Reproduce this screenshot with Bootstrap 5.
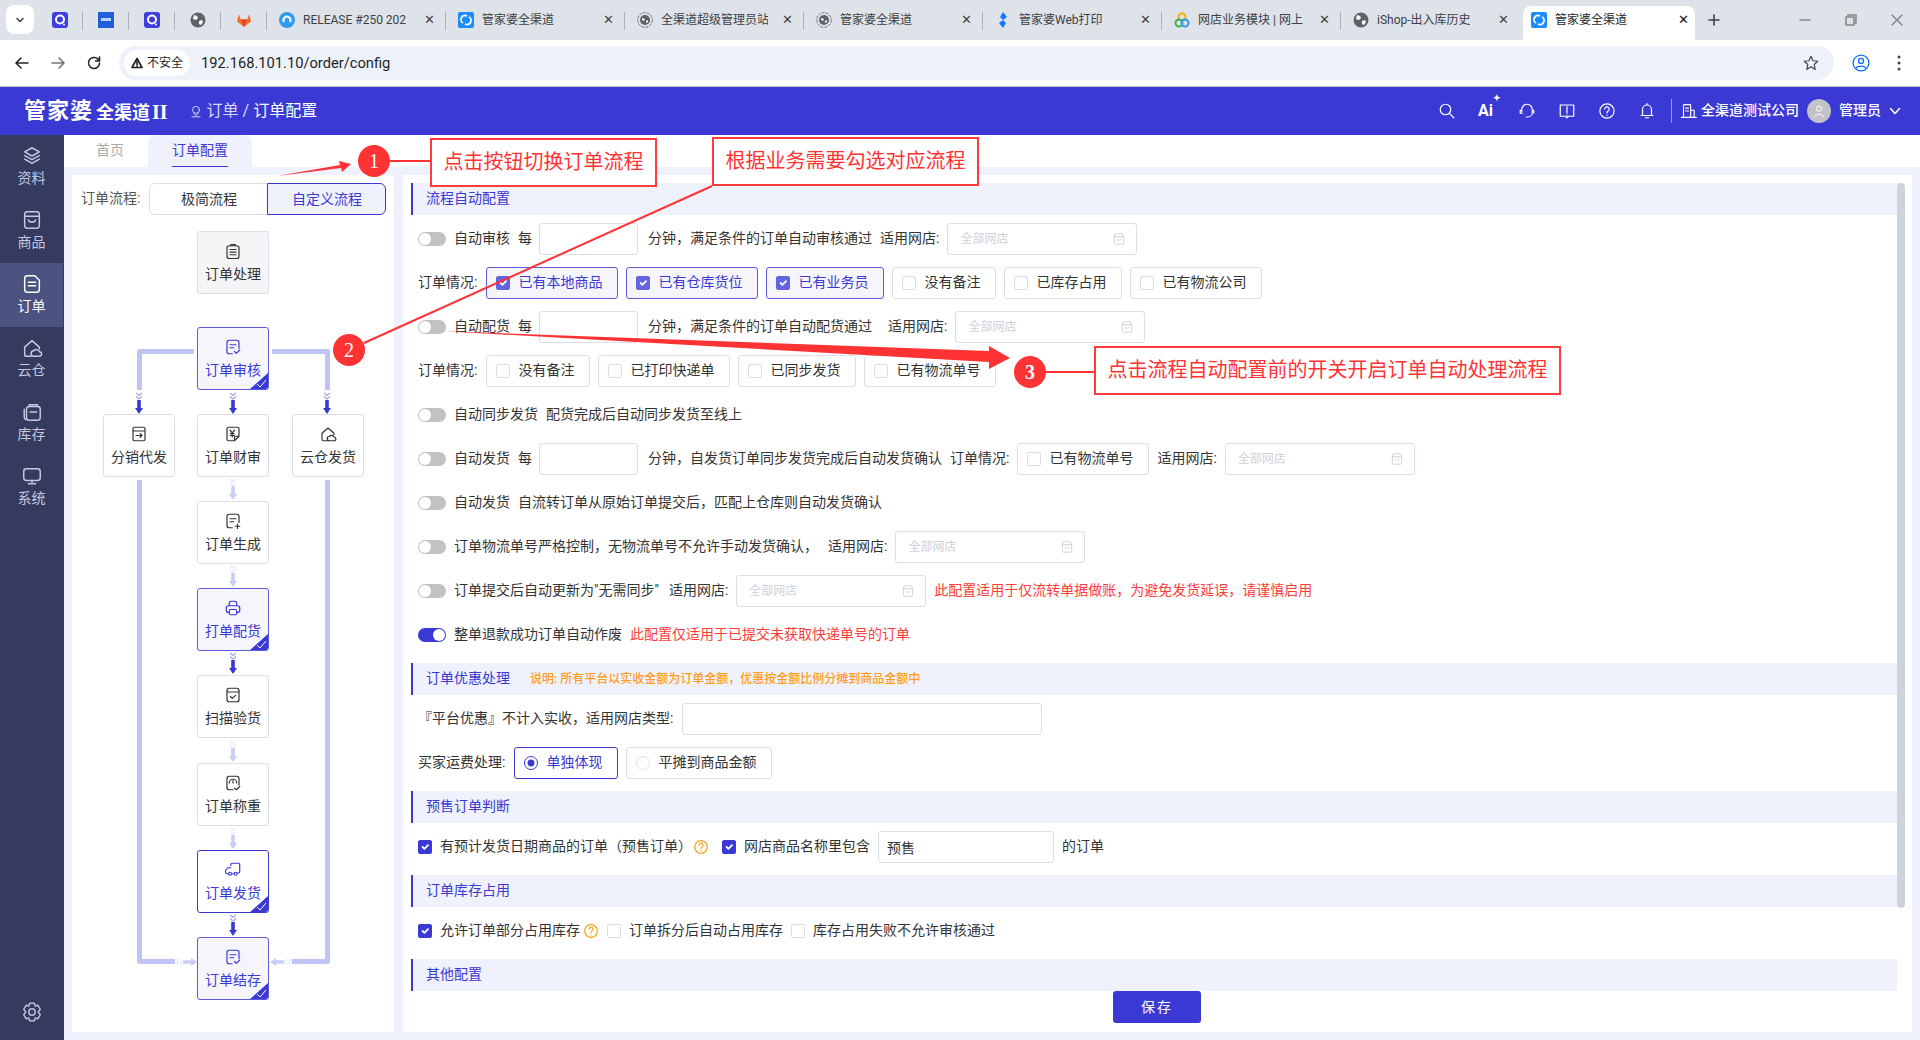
<!DOCTYPE html>
<html lang="zh-CN">
<head>
<meta charset="UTF-8">
<meta name="viewport" content="width=device-width, initial-scale=1">
<title>管家婆全渠道</title>
<link href="https://cdn.jsdelivr.net/npm/bootstrap@5.3.0/dist/css/bootstrap.min.css" rel="stylesheet">
<style>
body { width: 1920px; height: 1040px; overflow: hidden; background: #eff1fd; color: #333; font: 14px/1.4 Roboto, "Noto Sans CJK SC", sans-serif; position: relative; }
svg.ico { fill: none; stroke: currentColor; stroke-width: 1.6; stroke-linecap: round; stroke-linejoin: round; display: block; }

/* browser chrome */
.tabstrip { height: 40px; background: #dee3ea; color: #3c4043; font-size: 12px; }
.tab-menu { width: 28px; height: 29px; margin: 5px 3px 0 6px; background: #fff; border-radius: 8px; }
.tab-pin, .tab-wide { position: relative; flex: none; height: 40px; }
.tab-pin { width: 46px; }
.tab-wide { width: 179px; padding-left: 12px; }
.tab-pin:after, .tab-wide:after { content: ""; position: absolute; right: 0; top: 12px; height: 18px; border-right: 1px solid #aab0b8; }
.tab-wide.last:after { display: none; }
.tab-name { width: 107px; margin-left: 8px; white-space: nowrap; overflow: hidden; }
.tab-x { width: 16px; margin-left: 11px; font-size: 13px; text-align: center; color: #444; }
.tab-on { width: 172px; height: 34px; margin: 6px 0 0 3px; padding: 0 0 6px 8px; background: #fff; border-radius: 8px 8px 0 0; color: #1f1f1f; flex: none; }
.tab-on .tab-x { margin-left: 13px; color: #111; }
.tab-plus { margin-left: 13px; }
.win-ctl { width: 46px; color: #888; }
.addrbar { height: 47px; background: #fff; border-bottom: 1px solid #c7c7c7; color: #474747; }
.nav-ic { width: 36px; margin-left: 0; }
.addr-pill { width: 1715px; height: 34px; margin-left: 7px; background: #edf2fa; border-radius: 17px; padding-left: 5px; }
.addr-warn { height: 26px; width: 66px; background: #fff; border-radius: 13px; font-size: 12px; color: #1f1f1f; }
.addr-url { margin-left: 11px; font-size: 14.7px; color: #1f1f1f; }
.addr-star { margin-right: 14px; }
.addr-user { margin-left: 17px; }
.addr-dots { margin-left: 26px; }

/* app header */
.app-head { height: 48px; background: #3a39d3; color: #fff; padding-left: 24px; }
.logo-a { font-size: 22px; font-weight: 700; letter-spacing: 1px; line-height: 1; }
.logo-b { font-size: 18px; font-weight: 700; margin-left: 3px; line-height: 1; padding-top: 3px; }
.logo-b i { font: 700 20px "Liberation Serif", serif; margin-left: 2px; }
.crumb { font-size: 16px; margin-left: 21px; color: #d9d9f7; }
.crumb b { font-weight: 400; color: #fff; }
.head-right { margin-right: 3px; }
.head-ic { width: 40px; }
.ai-mark { font-size: 16px; font-weight: 700; line-height: 18px; padding-left: 5px; }
.ai-mark sup { font-size: 9px; top: -.5em; }
.head-sep { width: 1px; height: 24px; background: #9c9cea; margin: 0 8px 0 4px; }
.user-dot { width: 24px; height: 24px; border-radius: 50%; background: #c2c2c8; color: #fff; }

/* left rail */
.main-row { height: 905px; }
.rail { width: 64px; background: #343b5f; color: #c3c9e0; font-size: 14px; position: relative; }
.rail-item { height: 64px; width: 63px; padding-top: 10px; line-height: 20px; }
.rail-item svg { margin-bottom: 1px; }
.rail-item.on { background: #4b5380; color: #fff; }
.rail-gear { position: absolute; left: 21px; top: 866px; color: #b9c0de; }

/* tabs + panels */
.page-tabs { height: 32px; background: #fff; font-size: 14px; padding-left: 20px; }
.ptab { height: 32px; line-height: 30px; }
.ptab.idle { width: 52px; margin-right: 12px; text-align: center; color: #aaa; }
.ptab.cur { width: 104px; background: #eff1fd; border-radius: 8px 8px 0 0; text-align: center; color: #3a39d3; position: relative; }
.ptab.cur:after { content: ""; position: absolute; left: 24px; right: 24px; bottom: 0; height: 1px; background: #3a39d3; }
.panels { padding: 8px 8px 8px 8px; gap: 9px; height: 873px; }
.flow-panel { width: 322px; background: #fff; position: relative; flex: none; }
.conf-panel { width: 1509px; background: #fff; position: relative; flex: none; padding: 8px 15px 0 8px; }

.seg-line { position: absolute; left: 9px; top: 8px; }
.seg-label { margin-right: 9px; color: #555; }
.seg-opt { width: 119px; height: 32px; border: 1px solid #dcdde6; background: #fff; color: #333; font-size: 14px; padding: 0; box-shadow: none; }
.seg-opt.on { border-color: #3a39d3; background: #eff1fd; color: #3a39d3; }

.flow-lines { position: absolute; left: 0; top: 0; }
.fnode { position: absolute; width: 72px; height: 63px; border: 1px solid #dcdde6; border-radius: 3px; background: #fff; padding-top: 10px; line-height: 20px; color: #333; overflow: hidden; }
.fnode .lbl { margin-top: 4px; }
.fnode.grey { background: #f5f5f8; }
.fnode.act { background: #f5f5fb; border-color: #5b5bdc; color: #3a39d3; }
.fnode.act2 { background: #fff; border-color: #3a39d3; color: #3a39d3; }
.fnode .tick { position: absolute; right: 0; bottom: 0; }
.fx1 { left: 125px; } .fx0 { left: 31px; } .fx2 { left: 220px; }
.fy0 { top: 56px; } .fy1 { top: 152px; } .fy2 { top: 239px; } .fy3 { top: 326px; } .fy4 { top: 413px; }
.fy5 { top: 500px; } .fy6 { top: 588px; } .fy7 { top: 675px; } .fy8 { top: 762px; }

/* config */
.cfg-scroll { height: 808px; overflow: hidden; }
.cfg-band { height: 32px; background: #eff1fd; border-left: 2px solid #3a39d3; padding-left: 13px; margin-bottom: 8px; color: #3a39d3; line-height: 31px; }
.cfg-band em { font-style: normal; font-size: 12px; font-weight: 500; color: #ff9d1a; margin-left: 20px; }
.cfg-row { height: 32px; margin-bottom: 12px; padding-left: 7px; white-space: nowrap; }
.cfg-row .form-check-input { flex: none; margin: 0; width: 14px; height: 14px; border-color: #dcdde6; border-radius: 2px; box-shadow: none; }
.cfg-row .form-check-input:checked { background-color: #3a39d3; border-color: #3a39d3; }
.sw-wrap { margin: 0; padding: 0; min-height: 0; line-height: 0; }
.cfg-row .sw-wrap .form-check-input { width: 28px; height: 14px; border: 0; border-radius: 7px; background-color: #c2c2c2; background-position: 1px center; background-size: 12px 12px; float: none; background-image: url("data:image/svg+xml,<svg xmlns='http://www.w3.org/2000/svg' viewBox='0 0 12 12'><circle cx='6' cy='6' r='6' fill='%23fff'/></svg>"); }
.cfg-row .sw-wrap .form-check-input:checked { background-color: #3a39d3; background-position: right 1px center; }
.num-in, .text-in { height: 32px; border: 1px solid #dcdde6; border-radius: 3px; box-shadow: none; padding: 0 8px; font-size: 14px; color: #333; flex: none; }
.num-in { width: 99px; margin-left: -1px; }
.cfg-w-shop { width: 360px; }
.cfg-w-pre { width: 176px; }
.shop-sel { width: 190px; height: 32px; border: 1px solid #dcdde6; border-radius: 3px; padding: 0 10px 0 12px; color: #cfcfd8; font-size: 12px; flex: none; }
.chk-box { height: 32px; border: 1px solid #dcdde6; border-radius: 3px; padding: 0 15px 0 9px; gap: 8px; margin: 0; background: #fff; }
.chk-box.on { border-color: #5b5bdc; background: #f5f5fb; color: #3a39d3; }
.chk-box.on .form-check-input:checked { background-color: #6264e0; border-color: #6264e0; }
.chk-box .form-check-input[type=radio] { border-radius: 50%; }
.chk-box.rad-on { border-color: #3a39d3; background: #fff; color: #3a39d3; }
.chk-box.rad-on .form-check-input:checked { background-color: #fff; border-color: #3a39d3; border-width: 1px; background-image: url("data:image/svg+xml,<svg xmlns='http://www.w3.org/2000/svg' viewBox='0 0 14 14'><circle cx='7' cy='7' r='4' fill='%233a39d3'/></svg>"); }
.lead-in { margin-right: 1px; }
.nudge { margin-left: 2px; }
.warn-red { color: #ff3b3b; }
.hint-q { color: #f5a623; flex: none; stroke-width: 1.9 !important; }
.hint-a { margin-left: -7px; }
.hint-b { margin-left: -5px; }
.after-hint { margin-left: 5px !important; }
.thumb { position: absolute; left: 1494px; top: 8px; width: 8px; height: 725px; border-radius: 4px; background: #cdd3dd; }
.save-bar { height: 32px; padding-left: 6px; }
.save-btn { width: 88px; height: 32px; background: #3a39d3; border: 0; color: #fff; font-size: 14px; border-radius: 3px; padding: 0; letter-spacing: 2px; }

/* annotations */
.mark-svg { position: absolute; left: 0; top: 0; z-index: 10; pointer-events: none; }
.mark-box { position: absolute; z-index: 11; height: 49px; background: #fff; border: 2px solid #ff3b3b; color: #ff3333; font-size: 20px; line-height: 44px; text-align: center; white-space: nowrap; }
.mb1 { left: 430px; top: 138px; width: 227px; }
.mb2 { left: 712px; top: 137px; width: 267px; }
.mb3 { left: 1094px; top: 346px; width: 467px; }
</style>
</head>
<body>

<svg width="0" height="0" class="position-absolute">
  <defs>
    <symbol id="i-layers" viewBox="0 0 24 24"><path d="M12 3l8 4.5-8 4.5-8-4.5zM4 11.5l8 4.5 8-4.5M4 15.5l8 4.5 8-4.5"/></symbol>
    <symbol id="i-bag" viewBox="0 0 24 24"><rect x="4" y="3" width="16" height="18" rx="3"/><path d="M4 8h16M8 12c1 3 7 3 8 0"/></symbol>
    <symbol id="i-doc" viewBox="0 0 24 24"><path d="M7 3h8l5 5v10a3 3 0 0 1-3 3H7a3 3 0 0 1-3-3V6a3 3 0 0 1 3-3zM8 10h8M8 14h8"/></symbol>
    <symbol id="i-cloud" viewBox="0 0 24 24"><path d="M11 21H6a2 2 0 0 1-2-2v-8l8-7 8 7v2M14 21a3 3 0 0 1 0-6 3.5 3.5 0 0 1 6 1 2.5 2.5 0 0 1 0 5z"/></symbol>
    <symbol id="i-stock" viewBox="0 0 24 24"><rect x="6" y="6" width="15" height="15" rx="3"/><path d="M3.500 9v8a4 4 0 0 0 2 3.500M9 6V4h9v2M10 12h7"/></symbol>
    <symbol id="i-screen" viewBox="0 0 24 24"><rect x="3" y="4" width="18" height="13" rx="3"/><path d="M12 17v3M8 20.500h8"/></symbol>
    <symbol id="i-gear" viewBox="0 0 24 24"><path d="M9.500 2.500h5l1 3 3-.8 2.500 4.300-2.200 3 2.200 3-2.500 4.300-3-.8-1 3h-5l-1-3-3 .8L3 14.999l2.200-3L3 9l2.500-4.300 3 .8z"/><circle cx="12" cy="12" r="3.500"/></symbol>
    <symbol id="i-clip" viewBox="0 0 24 24"><rect x="4" y="5" width="16" height="17" rx="3"/><path d="M9 5V3.500h6V5M8 10h8M8 13.500h8M8 17h8"/></symbol>
    <symbol id="i-check-doc" viewBox="0 0 24 24"><path d="M11 21H7a3 3 0 0 1-3-3V6a3 3 0 0 1 3-3h10a3 3 0 0 1 3 3v8M8 9h8M8 13h5M14 18l2.500 2.500L21 16"/></symbol>
    <symbol id="i-box-arrow" viewBox="0 0 24 24"><path d="M6 3h12a2 2 0 0 1 2 2v14a2 2 0 0 1-2 2H6a2 2 0 0 1-2-2V5a2 2 0 0 1 2-2zM4 8h16M8 14h8M13.500 11.500L16 14l-2.500 2.500"/></symbol>
    <symbol id="i-yen" viewBox="0 0 24 24"><path d="M12 21H6a2 2 0 0 1-2-2V5a2 2 0 0 1 2-2h12a2 2 0 0 1 2 2v10l-6 6zM14 21v-6h6M8 7l3 3.500L14 7M11 10.500V16M8.500 11.500h5M8.500 14h5"/></symbol>
    <symbol id="i-doc-plus" viewBox="0 0 24 24"><path d="M11 21H7a3 3 0 0 1-3-3V6a3 3 0 0 1 3-3h10a3 3 0 0 1 3 3v8M8 9h8M8 13h5M18 16v6M15 19h6"/></symbol>
    <symbol id="i-print" viewBox="0 0 24 24"><path d="M7 9V6a3 3 0 0 1 3-3h4a3 3 0 0 1 3 3v3M7 18H6a3 3 0 0 1-3-3v-3a3 3 0 0 1 3-3h12a3 3 0 0 1 3 3v3a3 3 0 0 1-3 3h-1"/><rect x="7" y="14" width="10" height="7" rx="2"/></symbol>
    <symbol id="i-box-check" viewBox="0 0 24 24"><rect x="4" y="3" width="16" height="18" rx="3"/><path d="M4 8h16M8.500 14l2.500 2.500 4.500-4"/></symbol>
    <symbol id="i-gauge" viewBox="0 0 24 24"><path d="M12 21H7a3 3 0 0 1-3-3V6a3 3 0 0 1 3-3h10a3 3 0 0 1 3 3v9M7 12a5 5 0 0 1 10 0M12 9v3M14 19l2.500 2L21 17"/></symbol>
    <symbol id="i-truck" viewBox="0 0 24 24"><path d="M9 6V5a2 2 0 0 1 2-2h8a2 2 0 0 1 2 2v9a2 2 0 0 1-2 2h-1M13 17h-2M5 17H4a2 2 0 0 1-2-2v-2l3-4h4"/><circle cx="8" cy="17" r="2"/><circle cx="15.500" cy="17" r="2"/></symbol>
    <symbol id="i-shop" viewBox="0 0 24 24"><path d="M6 3h12l2 5v11a2 2 0 0 1-2 2H6a2 2 0 0 1-2-2V8zM4 8h16M8 12c1 3 7 3 8 0"/></symbol>
    <symbol id="i-help" viewBox="0 0 24 24"><circle cx="12" cy="12" r="9.500"/><path d="M9 9.500a3 3 0 1 1 4.500 2.500c-1 .6-1.500 1.200-1.500 2.500M12 17.500v.3"/></symbol>
    <symbol id="i-globe" viewBox="0 0 16 16"><circle cx="8" cy="8" r="7.500" fill="#5f6368" stroke="none"/><path d="M4 3l3 1 1 2-2 2-3-1zM9 9l3-1 1 2-2 3-2-1z" fill="#fff" stroke="none"/></symbol>
    <symbol id="i-ring" viewBox="0 0 16 16"><circle cx="8" cy="8" r="7.300" fill="none" stroke="#6a7a8c" stroke-width="1" stroke-dasharray="3 1"/><circle cx="8" cy="8" r="5" fill="#5f6368" stroke="none"/><path d="M5 6l3 1-1 2-2-1zM9 9l2-1v2l-2 1z" fill="#fff" stroke="none"/></symbol>
    <symbol id="i-swirl" viewBox="0 0 16 16"><rect width="16" height="16" rx="2" fill="#1a8cff" stroke="none"/><path d="M5 11a4 4 0 0 1 4-7M11 5a4 4 0 0 1-4 7" fill="none" stroke="#fff" stroke-width="1.800"/></symbol>
    <symbol id="i-q" viewBox="0 0 16 16"><rect width="16" height="16" rx="3" fill="#3d3de0" stroke="none"/><circle cx="8" cy="7.500" r="4" fill="none" stroke="#fff" stroke-width="2"/><circle cx="12" cy="12.500" r="1" fill="#fff" stroke="none"/></symbol>
    <symbol id="arr-d" viewBox="0 0 8 22"><path d="M1 1l3 2.500L7 1M1 4.500L4 7l3-2.500" fill="none" stroke="currentColor" stroke-width="1.300" opacity=".45"/><path d="M2.200 8h3.600v8H8l-4 6-4-6h2.200z" fill="currentColor" stroke="none"/></symbol>
    <symbol id="tick" viewBox="0 0 18 16"><path d="M18 0v14a2 2 0 0 1-2 2H0z" fill="#3a39d3" stroke="none"/><path d="M7 11l3 3 6-7" fill="none" stroke="#fff" stroke-width="1"/></symbol>
  </defs>
</svg>

<!-- browser tabs -->
<div class="tabstrip d-flex">
  <div class="tab-menu d-flex align-items-center justify-content-center"><svg class="ico" width="10" height="10" viewBox="0 0 10 10"><path d="M2 3.500L5 6.500 8 3.500"/></svg></div>
  <div class="tab-pin d-flex align-items-center justify-content-center"><svg width="16" height="16"><use href="#i-q"/></svg></div>
  <div class="tab-pin d-flex align-items-center justify-content-center"><svg width="16" height="16" viewBox="0 0 16 16"><rect width="16" height="16" fill="#1f5fd6"/><rect x="3" y="6" width="10" height="3" fill="#bcd4ff"/></svg></div>
  <div class="tab-pin d-flex align-items-center justify-content-center"><svg width="16" height="16"><use href="#i-q"/></svg></div>
  <div class="tab-pin d-flex align-items-center justify-content-center"><svg width="16" height="16"><use href="#i-globe"/></svg></div>
  <div class="tab-pin d-flex align-items-center justify-content-center"><svg width="16" height="16" viewBox="0 0 16 16"><path d="M8 15L1 9.500 2.800 2l2 5.500h6.400l2-5.500L15 9.500z" fill="#fc6d26"/><path d="M8 15L4.800 7.500h6.400z" fill="#e24329"/></svg></div>
  <div class="tab-wide d-flex align-items-center"><svg width="16" height="16" viewBox="0 0 16 16"><circle cx="8" cy="8" r="8" fill="#2f9bf0"/><path d="M5 10a3.500 3.500 0 1 1 6 0" fill="none" stroke="#fff" stroke-width="2"/></svg><span class="tab-name">RELEASE #250 202</span><span class="tab-x">✕</span></div>
  <div class="tab-wide d-flex align-items-center"><svg width="16" height="16"><use href="#i-swirl"/></svg><span class="tab-name">管家婆全渠道</span><span class="tab-x">✕</span></div>
  <div class="tab-wide d-flex align-items-center"><svg width="16" height="16"><use href="#i-ring"/></svg><span class="tab-name">全渠道超级管理员站</span><span class="tab-x">✕</span></div>
  <div class="tab-wide d-flex align-items-center"><svg width="16" height="16"><use href="#i-ring"/></svg><span class="tab-name">管家婆全渠道</span><span class="tab-x">✕</span></div>
  <div class="tab-wide d-flex align-items-center"><svg width="16" height="16" viewBox="0 0 16 16"><path d="M8 0l4 5-4 3-3-3zM8 16l-4-5 4-3 3 3z" fill="#1677ff"/></svg><span class="tab-name">管家婆Web打印</span><span class="tab-x">✕</span></div>
  <div class="tab-wide d-flex align-items-center"><svg width="16" height="16" viewBox="0 0 16 16"><circle cx="8" cy="5" r="3.500" fill="none" stroke="#f5b301" stroke-width="2"/><circle cx="5" cy="11" r="3.500" fill="none" stroke="#3fb24f" stroke-width="2"/><circle cx="11" cy="11" r="3.500" fill="none" stroke="#2f9bf0" stroke-width="2"/></svg><span class="tab-name">网店业务模块 | 网上</span><span class="tab-x">✕</span></div>
  <div class="tab-wide last d-flex align-items-center"><svg width="16" height="16"><use href="#i-globe"/></svg><span class="tab-name">iShop-出入库历史</span><span class="tab-x">✕</span></div>
  <div class="tab-on d-flex align-items-center"><svg width="16" height="16"><use href="#i-swirl"/></svg><span class="tab-name">管家婆全渠道</span><span class="tab-x">✕</span></div>
  <div class="tab-plus d-flex align-items-center justify-content-center"><svg class="ico" width="12" height="12" viewBox="0 0 12 12"><path d="M6 1v10M1 6h10"/></svg></div>
  <div class="ms-auto d-flex align-items-center">
    <div class="win-ctl d-flex justify-content-center"><svg class="ico" width="12" height="12" viewBox="0 0 12 12" stroke-width="1"><path d="M1 6h10"/></svg></div>
    <div class="win-ctl d-flex justify-content-center"><svg class="ico" width="12" height="12" viewBox="0 0 12 12" stroke-width="1"><path d="M3 3V1h8v8H9M1 3h8v8H1z"/></svg></div>
    <div class="win-ctl d-flex justify-content-center"><svg class="ico" width="12" height="12" viewBox="0 0 12 12" stroke-width="1"><path d="M1 1l10 10M11 1L1 11"/></svg></div>
  </div>
</div>

<!-- address bar -->
<div class="addrbar d-flex align-items-center">
  <div class="nav-ic d-flex justify-content-center ms-1 text-dark"><svg class="ico" width="16" height="16" viewBox="0 0 16 16"><path d="M14 8H2M7 3L2 8l5 5"/></svg></div>
  <div class="nav-ic d-flex justify-content-center text-secondary"><svg class="ico" width="16" height="16" viewBox="0 0 16 16"><path d="M2 8h12M9 3l5 5-5 5"/></svg></div>
  <div class="nav-ic d-flex justify-content-center text-dark"><svg class="ico" width="16" height="16" viewBox="0 0 16 16"><path d="M13.500 8a5.500 5.500 0 1 1-1.600-3.900L13.500 6M13.500 2v4h-4"/></svg></div>
  <div class="addr-pill d-flex align-items-center">
    <div class="addr-warn d-flex align-items-center justify-content-center gap-1"><svg class="ico" width="12" height="12" viewBox="0 0 12 12" stroke-width="1.100"><path d="M6 1.500L11 10.500H1zM6 5v3M6 9.300v.1"/></svg>不安全</div>
    <span class="addr-url">192.168.101.10/order/config</span>
    <svg class="ico ms-auto addr-star" width="18" height="18" viewBox="0 0 24 24"><path d="M12 3l2.700 6 6.300.7-4.700 4.300 1.300 6.500L12 17l-5.600 3.500L7.700 14 3 9.700 9.300 9z"/></svg>
  </div>
  <svg class="ico addr-user text-primary" width="20" height="20" viewBox="0 0 24 24"><circle cx="12" cy="12" r="9.500"/><circle cx="12" cy="9.500" r="3"/><path d="M6 18c2-3 10-3 12 0"/></svg>
  <svg width="4" height="16" viewBox="0 0 4 16" class="addr-dots"><circle cx="2" cy="2" r="1.500" fill="#444"/><circle cx="2" cy="8" r="1.500" fill="#444"/><circle cx="2" cy="14" r="1.500" fill="#444"/></svg>
</div>

<!-- app header -->
<div class="app-head d-flex align-items-center">
  <span class="logo-a">管家婆</span><span class="logo-b">全渠道<i>II</i></span>
  <span class="crumb d-flex align-items-center gap-1"><svg class="ico" width="14" height="14" viewBox="0 0 24 24"><circle cx="12" cy="10" r="6"/><path d="M5 22h14M8 16l4 4 4-4"/></svg>订单 / <b>订单配置</b></span>
  <div class="ms-auto head-right d-flex align-items-center">
    <div class="head-ic d-flex justify-content-center"><svg class="ico" width="18" height="18" viewBox="0 0 24 24"><circle cx="10" cy="10" r="7"/><path d="M15.500 15.500L21 21"/></svg></div>
    <div class="head-ic d-flex justify-content-center ai-mark">Ai<sup>✦</sup></div>
    <div class="head-ic d-flex justify-content-center"><svg class="ico" width="18" height="18" viewBox="0 0 24 24"><path d="M5 13V10a7 7 0 0 1 14 0v4a6 6 0 0 1-6 6h-2M5 11H3v4h3M19 11h2v4"/></svg></div>
    <div class="head-ic d-flex justify-content-center"><svg class="ico" width="18" height="18" viewBox="0 0 24 24"><path d="M3 4h18v15h-7l-2 2-2-2H3zM12 6v9M12 17.500v.1"/></svg></div>
    <div class="head-ic d-flex justify-content-center"><svg class="ico" width="18" height="18"><use href="#i-help"/></svg></div>
    <div class="head-ic d-flex justify-content-center"><svg class="ico" width="18" height="18" viewBox="0 0 24 24"><path d="M4 18h16M6 18V10a6 6 0 0 1 12 0v8M10 21h4M12 2v2"/></svg></div>
    <div class="head-sep"></div>
    <svg class="ico" width="17" height="18" viewBox="0 0 24 24"><path d="M5 21V4a1 1 0 0 1 1-1h8a1 1 0 0 1 1 1v17M15 11h5v10M2 21h21M8 8h4M8 12h4"/></svg>
    <span class="ms-1 fw-medium">全渠道测试公司</span>
    <div class="user-dot d-flex align-items-center justify-content-center ms-2 me-2"><svg class="ico" width="14" height="14" viewBox="0 0 24 24"><circle cx="12" cy="8" r="4.500"/><path d="M4 22c1-6 15-6 16 0"/></svg></div>
    <span class="fw-medium">管理员</span>
    <svg class="ico ms-2 me-3" width="12" height="12" viewBox="0 0 12 12" stroke-width="1"><path d="M1.500 3.500L6 8.500l4.500-5"/></svg>
  </div>
</div>

<div class="main-row d-flex">
  <!-- rail -->
  <aside class="rail">
    <div class="rail-item text-center"><svg class="ico mx-auto" width="22" height="22"><use href="#i-layers"/></svg>资料</div>
    <div class="rail-item text-center"><svg class="ico mx-auto" width="22" height="22"><use href="#i-bag"/></svg>商品</div>
    <div class="rail-item on text-center"><svg class="ico mx-auto" width="22" height="22"><use href="#i-doc"/></svg>订单</div>
    <div class="rail-item text-center"><svg class="ico mx-auto" width="22" height="22"><use href="#i-cloud"/></svg>云仓</div>
    <div class="rail-item text-center"><svg class="ico mx-auto" width="22" height="22"><use href="#i-stock"/></svg>库存</div>
    <div class="rail-item text-center"><svg class="ico mx-auto" width="22" height="22"><use href="#i-screen"/></svg>系统</div>
    <svg class="ico rail-gear" width="22" height="22"><use href="#i-gear"/></svg>
  </aside>

  <div class="flex-grow-1">
    <div class="page-tabs d-flex">
      <div class="ptab idle">首页</div>
      <div class="ptab cur">订单配置</div>
    </div>

    <div class="panels d-flex">
      <!-- flow -->
      <section class="flow-panel">
        <div class="seg-line d-flex align-items-center">
          <span class="seg-label">订单流程:</span>
          <div class="btn-group" role="group">
            <button type="button" class="btn seg-opt">极简流程</button>
            <button type="button" class="btn seg-opt on">自定义流程</button>
          </div>
        </div>

        <svg class="flow-lines" width="322" height="857" viewBox="72 175 322 857" fill="none">
          <g stroke="#bfc3f5" stroke-width="5" stroke-linejoin="round">
            <path d="M194 351.500H139.500V390"/>
            <path d="M139.500 480V961.500H175"/>
            <path d="M272 351.500H327.500V390"/>
            <path d="M327.500 480V961.500H292"/>
          </g>
          <g color="#3a39d3">
            <use href="#arr-d" x="135" y="392" width="8" height="22"/>
            <use href="#arr-d" x="229" y="392" width="8" height="22"/>
            <use href="#arr-d" x="323" y="392" width="8" height="22"/>
            <use href="#arr-d" x="229" y="652" width="8" height="22"/>
            <use href="#arr-d" x="229" y="914" width="8" height="22"/>
          </g>
          <g color="#c9ccf7">
            <use href="#arr-d" x="229" y="478" width="8" height="22"/>
            <use href="#arr-d" x="229" y="565" width="8" height="22"/>
            <use href="#arr-d" x="229" y="740" width="8" height="22"/>
            <use href="#arr-d" x="229" y="827" width="8" height="22"/>
            <use href="#arr-d" x="-966" y="175" width="8" height="22" transform="rotate(-90)"/>
            <use href="#arr-d" x="958" y="-292" width="8" height="22" transform="rotate(90)"/>
          </g>
        </svg>

        <div class="fnode grey fx1 fy0 text-center"><svg class="ico mx-auto" width="18" height="18"><use href="#i-clip"/></svg><div class="lbl">订单处理</div></div>
        <div class="fnode act fx1 fy1 text-center"><svg class="ico mx-auto" width="18" height="18"><use href="#i-check-doc"/></svg><div class="lbl">订单审核</div><svg class="tick" width="18" height="16"><use href="#tick"/></svg></div>
        <div class="fnode fx0 fy2 text-center"><svg class="ico mx-auto" width="18" height="18"><use href="#i-box-arrow"/></svg><div class="lbl">分销代发</div></div>
        <div class="fnode fx1 fy2 text-center"><svg class="ico mx-auto" width="18" height="18"><use href="#i-yen"/></svg><div class="lbl">订单财审</div></div>
        <div class="fnode fx2 fy2 text-center"><svg class="ico mx-auto" width="18" height="18"><use href="#i-cloud"/></svg><div class="lbl">云仓发货</div></div>
        <div class="fnode fx1 fy3 text-center"><svg class="ico mx-auto" width="18" height="18"><use href="#i-doc-plus"/></svg><div class="lbl">订单生成</div></div>
        <div class="fnode act fx1 fy4 text-center"><svg class="ico mx-auto" width="18" height="18"><use href="#i-print"/></svg><div class="lbl">打单配货</div><svg class="tick" width="18" height="16"><use href="#tick"/></svg></div>
        <div class="fnode fx1 fy5 text-center"><svg class="ico mx-auto" width="18" height="18"><use href="#i-box-check"/></svg><div class="lbl">扫描验货</div></div>
        <div class="fnode fx1 fy6 text-center"><svg class="ico mx-auto" width="18" height="18"><use href="#i-gauge"/></svg><div class="lbl">订单称重</div></div>
        <div class="fnode act2 fx1 fy7 text-center"><svg class="ico mx-auto" width="18" height="18"><use href="#i-truck"/></svg><div class="lbl">订单发货</div><svg class="tick" width="18" height="16"><use href="#tick"/></svg></div>
        <div class="fnode act fx1 fy8 text-center"><svg class="ico mx-auto" width="18" height="18"><use href="#i-check-doc"/></svg><div class="lbl">订单结存</div><svg class="tick" width="18" height="16"><use href="#tick"/></svg></div>
      </section>

      <!-- config -->
      <section class="conf-panel">
        <div class="thumb"></div>
        <div class="cfg-scroll">
          <div class="cfg-band">流程自动配置</div>

          <div class="cfg-row d-flex align-items-center gap-2">
            <div class="form-check form-switch sw-wrap"><input class="form-check-input" type="checkbox"></div>
            <span>自动审核</span><span>每</span><input class="form-control num-in" type="text">
            <span class="nudge">分钟，满足条件的订单自动审核通过</span><span>适用网店:</span>
            <div class="shop-sel d-flex align-items-center justify-content-between">全部网店<svg class="ico" width="14" height="16"><use href="#i-shop"/></svg></div>
          </div>

          <div class="cfg-row d-flex align-items-center gap-2">
            <span class="lead-in">订单情况:</span>
            <label class="chk-box on d-flex align-items-center"><input class="form-check-input" type="checkbox" checked>已有本地商品</label>
            <label class="chk-box on d-flex align-items-center"><input class="form-check-input" type="checkbox" checked>已有仓库货位</label>
            <label class="chk-box on d-flex align-items-center"><input class="form-check-input" type="checkbox" checked>已有业务员</label>
            <label class="chk-box d-flex align-items-center"><input class="form-check-input" type="checkbox">没有备注</label>
            <label class="chk-box d-flex align-items-center"><input class="form-check-input" type="checkbox">已库存占用</label>
            <label class="chk-box d-flex align-items-center"><input class="form-check-input" type="checkbox">已有物流公司</label>
          </div>

          <div class="cfg-row d-flex align-items-center gap-2">
            <div class="form-check form-switch sw-wrap"><input class="form-check-input" type="checkbox"></div>
            <span>自动配货</span><span>每</span><input class="form-control num-in" type="text">
            <span class="nudge">分钟，满足条件的订单自动配货通过</span><span class="ms-2">适用网店:</span>
            <div class="shop-sel d-flex align-items-center justify-content-between">全部网店<svg class="ico" width="14" height="16"><use href="#i-shop"/></svg></div>
          </div>

          <div class="cfg-row d-flex align-items-center gap-2">
            <span class="lead-in">订单情况:</span>
            <label class="chk-box d-flex align-items-center"><input class="form-check-input" type="checkbox">没有备注</label>
            <label class="chk-box d-flex align-items-center"><input class="form-check-input" type="checkbox">已打印快递单</label>
            <label class="chk-box d-flex align-items-center"><input class="form-check-input" type="checkbox">已同步发货</label>
            <label class="chk-box d-flex align-items-center"><input class="form-check-input" type="checkbox">已有物流单号</label>
          </div>

          <div class="cfg-row d-flex align-items-center gap-2">
            <div class="form-check form-switch sw-wrap"><input class="form-check-input" type="checkbox"></div>
            <span>自动同步发货</span><span>配货完成后自动同步发货至线上</span>
          </div>

          <div class="cfg-row d-flex align-items-center gap-2">
            <div class="form-check form-switch sw-wrap"><input class="form-check-input" type="checkbox"></div>
            <span>自动发货</span><span>每</span><input class="form-control num-in" type="text">
            <span class="nudge">分钟，自发货订单同步发货完成后自动发货确认</span><span>订单情况:</span>
            <label class="chk-box d-flex align-items-center"><input class="form-check-input" type="checkbox">已有物流单号</label>
            <span>适用网店:</span>
            <div class="shop-sel d-flex align-items-center justify-content-between">全部网店<svg class="ico" width="14" height="16"><use href="#i-shop"/></svg></div>
          </div>

          <div class="cfg-row d-flex align-items-center gap-2">
            <div class="form-check form-switch sw-wrap"><input class="form-check-input" type="checkbox"></div>
            <span>自动发货</span><span>自流转订单从原始订单提交后，匹配上仓库则自动发货确认</span>
          </div>

          <div class="cfg-row d-flex align-items-center gap-2">
            <div class="form-check form-switch sw-wrap"><input class="form-check-input" type="checkbox"></div>
            <span>订单物流单号严格控制，无物流单号不允许手动发货确认，</span><span class="nudge">适用网店:</span>
            <div class="shop-sel d-flex align-items-center justify-content-between">全部网店<svg class="ico" width="14" height="16"><use href="#i-shop"/></svg></div>
          </div>

          <div class="cfg-row d-flex align-items-center gap-2">
            <div class="form-check form-switch sw-wrap"><input class="form-check-input" type="checkbox"></div>
            <span>订单提交后自动更新为"无需同步"</span><span class="nudge">适用网店:</span>
            <div class="shop-sel d-flex align-items-center justify-content-between">全部网店<svg class="ico" width="14" height="16"><use href="#i-shop"/></svg></div>
            <span class="warn-red">此配置适用于仅流转单据做账，为避免发货延误，请谨慎启用</span>
          </div>

          <div class="cfg-row d-flex align-items-center gap-2">
            <div class="form-check form-switch sw-wrap"><input class="form-check-input" type="checkbox" checked></div>
            <span>整单退款成功订单自动作废</span><span class="warn-red">此配置仅适用于已提交未获取快递单号的订单</span>
          </div>

          <div class="cfg-band">订单优惠处理<em>说明: 所有平台以实收金额为订单金额，优惠按金额比例分摊到商品金额中</em></div>

          <div class="cfg-row d-flex align-items-center gap-2">
            <span class="lead-in">『平台优惠』不计入实收，适用网店类型:</span>
            <input class="form-control text-in cfg-w-shop" type="text">
          </div>

          <div class="cfg-row d-flex align-items-center gap-2">
            <span class="lead-in">买家运费处理:</span>
            <label class="chk-box rad-on d-flex align-items-center"><input class="form-check-input" type="radio" name="postage" checked>单独体现</label>
            <label class="chk-box d-flex align-items-center"><input class="form-check-input" type="radio" name="postage">平摊到商品金额</label>
          </div>

          <div class="cfg-band">预售订单判断</div>

          <div class="cfg-row d-flex align-items-center gap-2">
            <input class="form-check-input" type="checkbox" checked><span>有预计发货日期商品的订单（预售订单）</span>
            <svg class="ico hint-q hint-a" width="16" height="16"><use href="#i-help"/></svg>
            <input class="form-check-input after-hint" type="checkbox" checked><span>网店商品名称里包含</span>
            <input class="form-control text-in cfg-w-pre" type="text" value="预售">
            <span>的订单</span>
          </div>

          <div class="cfg-band">订单库存占用</div>

          <div class="cfg-row d-flex align-items-center gap-2">
            <input class="form-check-input" type="checkbox" checked><span>允许订单部分占用库存</span>
            <svg class="ico hint-q hint-b" width="16" height="16"><use href="#i-help"/></svg>
            <input class="form-check-input" type="checkbox"><span>订单拆分后自动占用库存</span>
            <input class="form-check-input" type="checkbox"><span>库存占用失败不允许审核通过</span>
          </div>

          <div class="cfg-band">其他配置</div>
        </div>
        <div class="save-bar d-flex justify-content-center"><button type="button" class="btn save-btn">保存</button></div>
      </section>
    </div>
  </div>
</div>

<!-- annotations over the page -->
<svg class="mark-svg" width="1920" height="1040" viewBox="0 0 1920 1040">
  <polygon points="277,176 340,165 339,161 351,164 342,172 341,168" fill="#ff3333"/>
  <path d="M390 161H430M1046 372H1094M364 343L712 186" stroke="#ff3333" stroke-width="2" fill="none"/>
  <polygon points="441,331 989,351 989,346 1010,358 989,369 989,362" fill="#ff3333"/>
  <g fill="#ff3333"><circle cx="374" cy="161" r="16"/><circle cx="349" cy="350" r="16"/><circle cx="1030" cy="372" r="16"/></g>
  <g fill="#fff" font-family="Liberation Serif, serif" font-size="20" text-anchor="middle">
    <text x="374" y="168">1</text><text x="349" y="357">2</text><text x="1030" y="379" font-weight="700">3</text>
  </g>
</svg>
<div class="mark-box mb1">点击按钮切换订单流程</div>
<div class="mark-box mb2">根据业务需要勾选对应流程</div>
<div class="mark-box mb3">点击流程自动配置前的开关开启订单自动处理流程</div>

<script src="https://cdn.jsdelivr.net/npm/bootstrap@5.3.0/dist/js/bootstrap.bundle.min.js"></script>
</body>
</html>
